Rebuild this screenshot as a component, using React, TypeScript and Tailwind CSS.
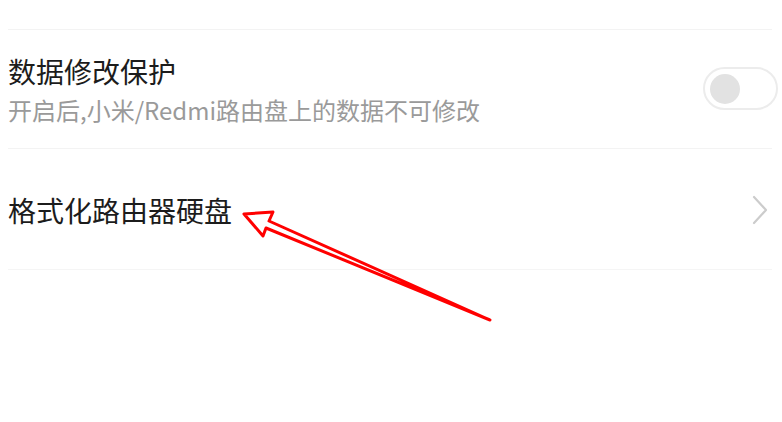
import React from "react";

export default function App() {
  return (
    <div
      className="relative w-[782px] h-[422px] bg-white overflow-hidden pl-2 pr-1 pt-[29px]"
      style={{ fontFamily: '"Noto Sans CJK SC", "Noto Sans", sans-serif' }}
    >
      <div className="h-px bg-[#f3f3f3] mr-[6px]" />
      <div className="h-[118px] flex items-center justify-between">
        <div className="flex flex-col pt-[1px]">
          <div className="text-[28px] leading-[36px] text-[#1c1c1c]">数据修改保护</div>
          <div className="text-[24px] leading-[34px] text-[#9a9a9a] mt-[4px]">
            开启后,小米/Redmi路由盘上的数据不可修改
          </div>
        </div>
        <div className="w-[75px] h-[43px] rounded-full border-2 border-[#ececec] bg-white flex items-center pl-[5px] mt-[-1px]">
          <div className="w-[30px] h-[30px] rounded-full bg-[#e2e2e2]" />
        </div>
      </div>
      <div className="h-px bg-[#f3f3f3] mr-[6px]" />
      <div className="h-[120px] flex items-center justify-between">
        <div className="text-[28px] leading-[36px] text-[#1c1c1c] mt-[2px]">格式化路由器硬盘</div>
        <svg width="18" height="32" viewBox="0 0 18 32" className="mr-[9px] mt-[2px]">
          <path d="M3 3 L15 16 L3 29" fill="none" stroke="#cccccc" strokeWidth="2.2" strokeLinecap="round" strokeLinejoin="round" />
        </svg>
      </div>
      <div className="h-px bg-[#f5f5f5] mr-[6px]" />
      <svg
        className="absolute left-0 top-0 pointer-events-none"
        width="782"
        height="422"
        viewBox="0 0 782 422"
      >
        <polygon
          points="244,214 273,212 269,221 490,320 266,228 263,236"
          fill="white"
          stroke="#ff0000"
          strokeWidth="3"
          strokeLinejoin="round"
        />
      </svg>
    </div>
  );
}
